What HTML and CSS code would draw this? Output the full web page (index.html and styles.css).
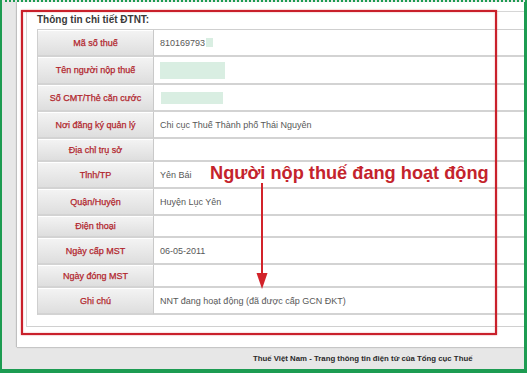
FILE: index.html
```html
<!DOCTYPE html>
<html lang="vi">
<head>
<meta charset="utf-8">
<title>Thông tin chi tiết ĐTNT</title>
<link rel="stylesheet" href="styles.css">
</head>
<body>
<div class="frame">
  <div class="panel">
    <div class="inner">
      <div class="title">Thông tin chi tiết ĐTNT:</div>
      <div class="grid">
        <div class="lab">Mã số thuế</div><div class="val">810169793<span class="mask m1"></span></div>
        <div class="lab">Tên người nộp thuế</div><div class="val"><span class="mask m2"></span></div>
        <div class="lab">Số CMT/Thẻ căn cước</div><div class="val"><span class="mask m3"></span></div>
        <div class="lab">Nơi đăng ký quản lý</div><div class="val">Chi cục Thuế Thành phố Thái Nguyên</div>
        <div class="lab">Địa chỉ trụ sở</div><div class="val"></div>
        <div class="lab">Tỉnh/TP</div><div class="val">Yên Bái</div>
        <div class="lab">Quận/Huyện</div><div class="val">Huyện Lục Yên</div>
        <div class="lab">Điện thoại</div><div class="val"></div>
        <div class="lab">Ngày cấp MST</div><div class="val">06-05-2011</div>
        <div class="lab">Ngày đóng MST</div><div class="val"></div>
        <div class="lab">Ghi chú</div><div class="val">NNT đang hoạt động (đã được cấp GCN ĐKT)</div>
      </div>
    </div>
  </div>
  <div class="footer">
    <div class="foot1">Thuế Việt Nam - Trang thông tin điện tử của Tổng cục Thuế</div>
  </div>

  <div class="redbox"></div>
  <div class="note">Người nộp thuế đang hoạt động</div>
  <svg class="arrow" width="14" height="108" viewBox="0 0 14 108">
    <line x1="7" y1="0" x2="7" y2="94" stroke="#d2232a" stroke-width="2"/>
    <polygon points="1.5,90 12.5,90 7,106" fill="#d2232a"/>
  </svg>
</div>
</body>
</html>
```

FILE: styles.css
```css
html, body {
  margin: 0;
  padding: 0;
}
body {
  width: 527px;
  height: 373px;
  overflow: hidden;
  font-family: "Liberation Sans", Arial, sans-serif;
}
.frame {
  position: relative;
  box-sizing: border-box;
  width: 527px;
  height: 373px;
  border-left: 2px solid #1d9c52;
  border-right: 3px solid #1d9c52;
  border-bottom: 4px solid #1d9c52;
  border-top: 2px dotted #1d9c52;
  background: #e7e7e7;
  display: flex;
  flex-direction: column;
  overflow: hidden;
}
.panel {
  flex: none;
  box-sizing: border-box;
  height: 345px;
  margin-left: 15px;
  background: #ffffff;
  box-shadow: -1px 0 1px rgba(0,0,0,0.15), 0 1px 1px rgba(0,0,0,0.12);
  padding: 9px 0 0 9px;
}
.inner {
  border-left: 1px solid #d6d6d6;
  border-top: 1px solid #d6d6d6;
  border-bottom: 1px solid #d0d0d0;
  padding: 0 0 11px 10px;
}
.title {
  font-size: 10px;
  font-weight: bold;
  line-height: 13px;
  color: #3a3a3a;
  padding-top: 1px;
  margin-bottom: 3px;
}
.grid {
  display: grid;
  grid-template-columns: 116px 1fr;
  grid-template-rows: 27px 28px 27px 27px 23px 27px 27px 22px 27px 23px 27px;
  border-top: 1px solid #cfcfcf;
  border-left: 1px solid #cfcfcf;
}
.lab, .val {
  box-sizing: border-box;
  border-bottom: 2px solid #d3d3d3;
  display: flex;
  align-items: center;
  font-size: 9px;
}
.lab {
  justify-content: center;
  background: linear-gradient(#f4f4f4, #dedede);
  box-shadow: inset 0 1px 0 #ffffff;
  border-right: 1px solid #c9c9c9;
  color: #b2262d;
  -webkit-text-stroke: 0.25px #b2262d;
}
.val {
  padding-left: 6px;
  color: #585858;
}
.mask {
  display: inline-block;
  background: #d9eee2;
}
.m1 { width: 7px; height: 9px; margin-left: 1px; }
.m2 { width: 65px; height: 17px; }
.m3 { width: 62px; height: 12px; margin-left: 1px; }
.footer {
  flex: 1;
  padding: 6px 0 0 251px;
  font-size: 7.8px;
  line-height: 11px;
  color: #2a2a2a;
  white-space: nowrap;
}
.foot1 { font-weight: bold; }
.redbox {
  position: absolute;
  left: 19px;
  top: 8px;
  width: 472px;
  height: 321px;
  border: 2px solid #c9202b;
  box-shadow: 0 0 1.5px rgba(201,32,43,0.6), inset 0 0 1.5px rgba(201,32,43,0.6);
}
.note {
  position: absolute;
  left: 208px;
  top: 162px;
  font-size: 18.2px;
  line-height: 18.5px;
  font-weight: bold;
  color: #c4232c;
  white-space: nowrap;
}
.arrow {
  position: absolute;
  left: 253px;
  top: 181px;
}
```
